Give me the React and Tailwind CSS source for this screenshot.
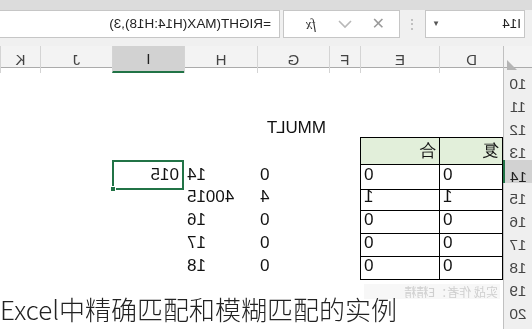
import React from "react";

const GRID = "grid grid-cols-[29px_64px_79px_31px_72px_73px_72px_72px_40px]";
const LETTERS = ["D", "E", "F", "G", "H", "I", "J", "K"];

const rows = [
  { n: 10, cells: {} },
  { n: 11, cells: {} },
  { n: 12, cells: { G: { t: "MMULT", align: "left" } } },
  { n: 13, cells: { D: { t: "复", head: true }, E: { t: "合", head: true } } },
  { n: 14, cells: { D: { t: "0" }, E: { t: "0" }, G: { t: "0" }, H: { t: "14" }, I: { t: "015", align: "left", sel: true } } },
  { n: 15, cells: { D: { t: "1" }, E: { t: "1" }, G: { t: "4" }, H: { t: "40015" } } },
  { n: 16, cells: { D: { t: "0" }, E: { t: "0" }, G: { t: "0" }, H: { t: "16" } } },
  { n: 17, cells: { D: { t: "0" }, E: { t: "0" }, G: { t: "0" }, H: { t: "17" } } },
  { n: 18, cells: { D: { t: "0" }, E: { t: "0" }, G: { t: "0" }, H: { t: "18" } } },
  { n: 19, cells: {} },
  { n: 20, cells: {} },
  { n: "", cells: {} },
];

function Cell({ col, rowN, c }) {
  const inTable = (col === "D" || col === "E") && rowN >= 13 && rowN <= 18;
  let cls = "relative flex items-center h-full px-[3px] whitespace-nowrap overflow-visible ";
  if (inTable) {
    cls += "border-b border-r border-black ";
    if (col === "D") cls += "border-l ";
    if (rowN === 13) cls += "border-t ";
  }
  if (c && c.head) cls += "bg-[#e2efda] ";
  if (c && c.sel) cls += "border-2 border-[#217346] ";
  const align = c && (c.head || c.align === "left") ? "justify-start" : "justify-end";
  cls += align;
  return (
    <div className={cls}>
      {c ? <span className="relative z-10">{c.t}</span> : null}
      {c && c.sel ? (
        <div className="absolute right-[-4px] bottom-[-4px] w-[6px] h-[6px] bg-[#217346] border border-white z-20" />
      ) : null}
    </div>
  );
}

export default function App() {
  return (
    <div className="relative w-[532px] h-[329px] overflow-hidden bg-white font-['Liberation_Sans',Arial,sans-serif]">
      <div className="w-[532px] h-[329px] [transform:scaleX(-1)] flex flex-col">
        {/* top band */}
        <div className="h-[10px] bg-[#dcdcdc] shrink-0" />
        {/* formula bar */}
        <div className="h-[28px] shrink-0 bg-[#f0f0f0] flex items-stretch">
          <div className="ml-[7px] w-[100px] bg-white border border-[#c6c6c6] flex items-center justify-between pl-[3px] pr-[6px]">
            <span className="text-[13.5px] text-[#222]">I14</span>
            <span className="text-[8px] text-[#555]">▼</span>
          </div>
          <div className="w-[25px] flex items-center justify-center text-[#b0b0b0] text-[14px]">⋮</div>
          <div className="w-[117px] bg-white border border-[#c6c6c6] flex items-center">
            <span className="ml-[14px] text-[#9a9a9a] text-[16px] leading-none">✕</span>
            <svg className="ml-[20px]" width="14" height="10" viewBox="0 0 14 10">
              <path d="M1 2 L7 8 L13 2" fill="none" stroke="#b8b8b8" strokeWidth="1.6" />
            </svg>
            <span className="ml-[22px] text-[14px] italic text-[#333] font-['Liberation_Serif',serif]">fx</span>
          </div>
          <div className="ml-[3px] flex-1 bg-white border border-[#c6c6c6] border-r-0 flex items-center pl-[8px]">
            <span className="text-[13.5px] text-[#222] whitespace-nowrap">=RIGHT(MAX(H14:H18),3)</span>
          </div>
        </div>
        <div className="h-[8px] shrink-0 bg-[#f0f0f0]" />
        {/* column header */}
        <div className={GRID + " h-[22px] shrink-0 bg-[#f3f3f3] border-b border-[#ababab] text-[15px] text-[#444]"}>
          <div className="relative border-r border-[#c0c0c0]">
            <div className="absolute right-[3px] bottom-[3px] w-0 h-0 border-l-[10px] border-l-transparent border-b-[10px] border-b-[#b4b4b4]" />
          </div>
          {LETTERS.map((l) => (
            <div
              key={l}
              className={
                "flex items-center justify-center pt-[2px] border-r border-[#d4d4d4] " +
                (l === "I" ? "bg-[#d2d2d2] border-b-2 border-b-[#217346] text-[#222]" : "")
              }
            >
              {l}
            </div>
          ))}
        </div>
        {/* body */}
        <div className="flex flex-col text-[17px] text-[#111]">
          {rows.map((r, i) => (
            <div key={i} className={GRID + " h-[23px] shrink-0"}>
              <div
                className={
                  "flex items-center justify-center pt-[4px] text-[15.5px] border-b border-[#d8d8d8] " +
                  (r.n === 14
                    ? "bg-[#d2d2d2] border-r-2 border-r-[#217346] text-[#222]"
                    : "bg-[#efefef] border-r border-r-[#c0c0c0] text-[#444]")
                }
              >
                {r.n}
              </div>
              {LETTERS.map((l) => (
                <Cell key={l} col={l} rowN={r.n} c={r.cells[l]} />
              ))}
            </div>
          ))}
        </div>
        {/* faint watermark */}
        <div className="absolute left-[32px] top-[284px] w-[136px] h-[15px] bg-[#f7f7f7] flex items-center pl-[2px] text-[12px] text-[#cfcfcf] whitespace-nowrap font-['Noto_Sans_CJK_SC',sans-serif]">
          实战 作者：E精精
        </div>
      </div>
      {/* caption */}
      <div className="absolute left-0 top-[295px] text-[26px] leading-[28px] text-[#222] font-light font-['Noto_Sans_CJK_SC','Noto_Sans',sans-serif] whitespace-nowrap">
        Excel中精确匹配和模糊匹配的实例
      </div>
    </div>
  );
}
